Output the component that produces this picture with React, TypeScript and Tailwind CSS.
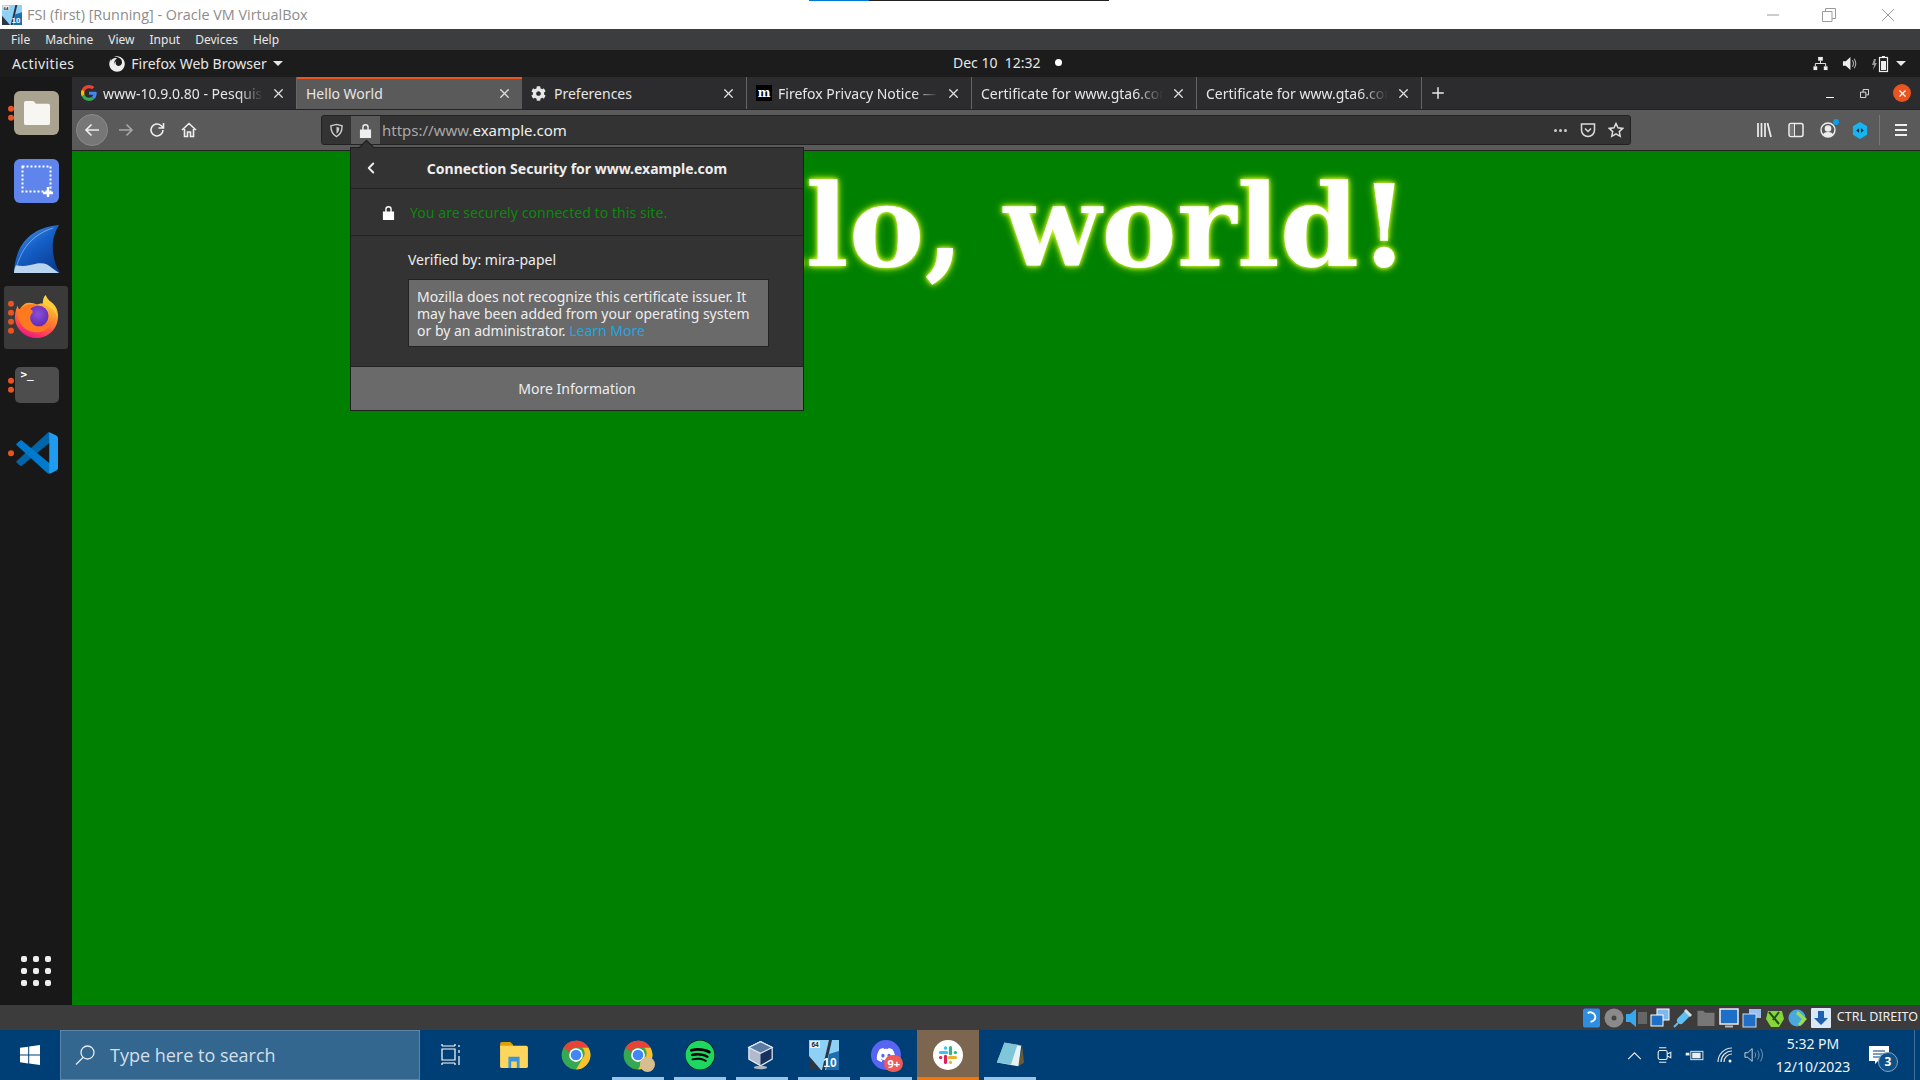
import { ChevronLeft, Plus, X } from "lucide-react";
import { FaCog, FaDiscord, FaFirefox, FaSpotify } from "react-icons/fa";

const ui = "font-['Noto_Sans',sans-serif]";

function GoogleIcon() {
  return (
    <svg viewBox="0 0 48 48" className="-mr-[2px] h-4 w-4 shrink-0">
      <path fill="#EA4335" d="M24 9.5c3.5 0 6.7 1.3 9.2 3.4l6.9-6.9C35.900 2.400 30.300 0 24 0 14.600 0 6.500 5.400 2.600 13.200l8 6.200C12.500 13.600 17.800 9.500 24 9.500z" />
      <path fill="#4285F4" d="M47 24.500c0-1.600-.1-3.100-.4-4.500H24v9h13c-.6 3-2.200 5.500-4.800 7.200l7.700 6C44.400 38 47 31.800 47 24.500z" />
      <path fill="#FBBC05" d="M10.600 28.600A14.500 14.500 0 0 1 10.600 19.400l-8-6.200a24 24 0 0 0 0 21.600l8-6.200z" />
      <path fill="#34A853" d="M24 48c6.500 0 11.900-2.100 15.900-5.800l-7.700-6c-2.200 1.400-4.900 2.300-8.200 2.300-6.200 0-11.500-4.100-13.400-9.900l-8 6.200C6.500 42.600 14.600 48 24 48z" />
    </svg>
  );
}

function MozillaIcon() {
  return (
    <div className="-mr-[2px] flex h-4 w-4 shrink-0 items-center justify-center bg-black font-['DejaVu_Serif',serif] text-[12px] leading-none font-bold text-white">
      m
    </div>
  );
}

function Tab({ title, icon, active, fade }: { title: string; icon?: React.ReactNode; active?: boolean; fade?: boolean }) {
  return (
    <div
      className={
        active
          ? "flex h-full w-[225px] items-center gap-2 border-t-2 border-[#e95420] bg-[#5a5a5a] pr-[10px] pb-[2px] pl-[9px]"
          : "flex h-full w-[225px] items-center gap-2 border-r border-[#666] pr-[10px] pl-[9px]"
      }
    >
      {icon}
      <span
        className={
          fade
            ? "min-w-0 flex-1 overflow-hidden text-[14px] whitespace-nowrap text-[#e6e6e6] [mask-image:linear-gradient(to_right,#000_85%,transparent)]"
            : "min-w-0 flex-1 overflow-hidden text-[14px] whitespace-nowrap text-[#e6e6e6]"
        }
      >
        {title}
      </span>
      <X className="h-[15px] w-[15px] shrink-0 text-[#e0e0e0]" strokeWidth={2} />
    </div>
  );
}

function DockDots({ count }: { count: number }) {
  return (
    <div className="absolute top-1/2 left-[4px] flex -translate-y-1/2 flex-col gap-[3.5px]">
      {Array.from({ length: count }).map((_, i) => (
        <span key={i} className="h-[5.500px] w-[5.500px] rounded-full bg-[#e95420]" />
      ))}
    </div>
  );
}

function FirefoxLogo() {
  return (
    <svg viewBox="0 0 48 48" className="ml-[1px] h-[48px] w-[46px]">
      <defs>
        <linearGradient id="ffa" x1="0.7" y1="0" x2="0.3" y2="1">
          <stop offset="0" stopColor="#ffe14d" />
          <stop offset="0.45" stopColor="#ff8a2a" />
          <stop offset="0.8" stopColor="#ff3d5a" />
          <stop offset="1" stopColor="#e3128f" />
        </linearGradient>
        <radialGradient id="ffb" cx="0.5" cy="0.4" r="0.6">
          <stop offset="0" stopColor="#8f4fd6" />
          <stop offset="1" stopColor="#5b2bb8" />
        </radialGradient>
      </defs>
      <path fill="url(#ffa)" d="M46 23c0 13-10 23-22 23C11 46 1 36 1 24c0-6 2-10 3-12 0 2 1 4 2 4 2-4 6-7 9-7 4 0 7 1 9 2 3-1 5-1 6-1 0-4 1-7 3-9 1 2 2 4 4 6 6 4 9 9 9 16z" />
      <circle cx="25" cy="23" r="11" fill="url(#ffb)" />
      <path fill="#ff7a1f" d="M4 20c2-4 6-8 11-9 6-1 10 0 13 2-5-1-10 0-11 3 3 1 3 3 2 4-2 2-3 5-1 9 2 4 7 6 12 5 5-1 8-3 10-7-2 7-8 13-16 13-11 0-21-9-20-20z" />
      <path fill="#ffcf3a" d="M33 2c1 3 3 5 5 7 4 4 7 9 7 15-2-6-5-9-9-11-2-1-4-1-5-3 0-3 1-6 2-8z" />
    </svg>
  );
}

function WiresharkLogo() {
  return (
    <svg viewBox="0 0 48 50" className="ml-[2px] h-[48px] w-[46px]">
      <defs>
        <linearGradient id="wsa" x1="0" y1="0" x2="0.7" y2="1">
          <stop offset="0" stopColor="#5aa0e8" />
          <stop offset="0.5" stopColor="#1560c8" />
          <stop offset="1" stopColor="#0a3f96" />
        </linearGradient>
      </defs>
      <path fill="url(#wsa)" d="M0 50C1 24 14 3 47 0c-5 8-8 18-6 30 1 8 3 14 7 20z" />
      <path fill="#b9d4ee" d="M0 50c0-3 1-6 2-8 8 2 15 0 23-2 6-1 11 1 15 5l7 5z" />
      <path fill="none" stroke="#fff" strokeOpacity="0.4" strokeWidth="1" d="M3 42c6-18 16-32 38-39" />
    </svg>
  );
}

function VsCodeLogo() {
  return (
    <svg viewBox="0 0 48 48" className="ml-[2px] h-[42px] w-[42px]">
      <path fill="#0065a9" d="M46 6 36 1 3 31l-3 3 3 3 3 2 40-33z" />
      <path fill="#007acc" d="M46 42 36 47 3 17 0 14l3-3 3-2 40 33z" />
      <path fill="#1f9cf0" d="M36 47c1 .5 3 .5 4 0l6-3c1-.5 2-2 2-3V7c0-1-1-2.500-2-3l-6-3c-1-.5-3-.5-4 0 2 0 2 1 2 3v40c0 2 0 3-2 3z" />
    </svg>
  );
}

function ChromeIcon() {
  return (
    <svg viewBox="0 0 48 48" className="h-[30px] w-[30px]">
      <circle cx="24" cy="24" r="23" fill="#34a853" />
      <path fill="#ea4335" d="M24 1a23 23 0 0 1 20 11.500H24a11.500 11.500 0 0 0-10.500 7L4.100 12.500A23 23 0 0 1 24 1z" />
      <path fill="#fbc02d" d="M44 12.500A23 23 0 0 1 24 47l10-17a11.500 11.500 0 0 0 0-17.500z" />
      <circle cx="24" cy="24" r="11" fill="#fff" />
      <circle cx="24" cy="24" r="8.500" fill="#4285f4" />
    </svg>
  );
}

function BoxIcon() {
  return (
    <svg viewBox="0 0 32 36" className="-ml-[4px] h-[30px] w-[27px]">
      <path fill="#16325c" stroke="#dfe8f3" strokeWidth="1.500" d="M16 2 30 9v14l-14 8-14-8V9z" />
      <path fill="#5c7ba3" stroke="#dfe8f3" strokeWidth="1.500" d="M16 2 30 9l-14 7L2 9z" />
      <path fill="#e4ebf4" d="M2 9l14 7v15L2 23z" opacity="0.75" />
      <ellipse cx="16" cy="33" rx="8" ry="2" fill="#aab7c7" />
    </svg>
  );
}

function VmIcon({ className }: { className: string }) {
  return (
    <svg viewBox="0 0 30 30" className={className}>
      <rect width="30" height="30" fill="#8fd0f5" />
      <path fill="#2a3644" d="M0 16 12 30H0zM20 0h3L16 30h-3z" />
      <path fill="#1b6fb0" d="M20 14l10-3v19H17z" />
      <rect x="1" y="1" width="10" height="7" fill="#eee" />
      <text x="6" y="7" textAnchor="middle" fontSize="6.500" fontWeight="700" fill="#222" fontFamily="Liberation Sans">64</text>
      <text x="21" y="27" textAnchor="middle" fontSize="12" fontWeight="700" fill="#fff" fontFamily="Liberation Sans">10</text>
    </svg>
  );
}

function SlackIcon() {
  return (
    <svg viewBox="0 0 48 48" className="h-[30px] w-[30px]">
      <circle cx="24" cy="24" r="24" fill="#fff" />
      <g strokeWidth="5" strokeLinecap="round" fill="none">
        <path stroke="#36c5f0" d="M12 20h10M20 12.500v.5" />
        <path stroke="#2eb67d" d="M28 12v10M35.500 20h.5" />
        <path stroke="#ecb22e" d="M26 28h10M28 35.500v.5" />
        <path stroke="#e01e5a" d="M20 26v10M12.500 28h-.5" />
      </g>
    </svg>
  );
}

function NotepadIcon() {
  return (
    <svg viewBox="0 0 32 32" className="h-[30px] w-[30px]">
      <path fill="#6d5a2e" d="M29 6 31 24 25 28z" />
      <path fill="#e8f2f5" d="M10 3 28 6 25 28 2 24z" />
      <path fill="#5cb7cf" d="M10 3 24 5 17 26 2 24z" opacity="0.75" />
      <path fill="none" stroke="#9fb4bb" strokeWidth="1" strokeDasharray="1 1" d="M10 3 28 6" />
    </svg>
  );
}

function TaskItem({ children, active, on = true }: { children: React.ReactNode; active?: boolean; on?: boolean }) {
  return (
    <div className={active ? "relative flex h-full w-[62px] items-center justify-center bg-[#7d6650]" : "relative flex h-full w-[62px] items-center justify-center"}>
      {children}
      {on && (
        <span className={active ? "absolute right-0 bottom-0 left-0 h-[3px] bg-[#f0760a]" : "absolute right-[5px] bottom-0 left-[5px] h-[3px] bg-[#99c5e8]"} />
      )}
    </div>
  );
}

function StatusIcon({ children }: { children: React.ReactNode }) {
  return <div className="flex h-[20px] w-[23px] items-center justify-center">{children}</div>;
}

export default function App() {
  return (
    <div className={`relative flex h-[1080px] w-[1920px] flex-col overflow-hidden bg-black ${ui}`}>
      {/* VirtualBox window title */}
      <div className="relative flex h-[29px] shrink-0 items-center bg-white pl-[2px]">
        <VmIcon className="mr-[5px] h-[20px] w-[20px]" />
        <span className="font-['Open_Sans',sans-serif] text-[14.400px] text-[#8c8c8c]">FSI (first) [Running] - Oracle VM VirtualBox</span>
        <div className="absolute top-0 left-[809px] flex h-px w-[300px]">
          <span className="w-[60px] bg-[#0078d7]" />
          <span className="flex-1 bg-[#222]" />
        </div>
        <div className="absolute top-0 right-0 flex h-full items-center text-[#9a9a9a]">
          <svg viewBox="0 0 14 14" className="mr-[42px] h-[14px] w-[14px]" stroke="currentColor" fill="none"><path d="M1 7h12" /></svg>
          <svg viewBox="0 0 14 14" className="mr-[45px] h-[14px] w-[14px]" stroke="currentColor" fill="none"><path d="M.5 3.500h9.500v10H.5zM3.500 3.500V.5h10v10H10" /></svg>
          <svg viewBox="0 0 14 14" className="mr-[25px] h-[14px] w-[14px]" stroke="currentColor" fill="none"><path d="M1 1l12 12M13 1 1 13" /></svg>
        </div>
      </div>

      {/* VirtualBox menu */}
      <div className="flex h-[21px] shrink-0 items-center gap-[15px] bg-[#3c3d3f] pl-[11px] text-[12px] text-[#e8e8e8]">
        <span>File</span>
        <span>Machine</span>
        <span>View</span>
        <span>Input</span>
        <span>Devices</span>
        <span>Help</span>
      </div>

      {/* GNOME top bar */}
      <div className="relative flex h-[27px] shrink-0 items-center bg-[#1c1c1c] pl-[12px] text-[14px] text-[#e6e6e6]">
        <span className="tracking-[0.4px]">Activities</span>
        <FaFirefox className="ml-[35px] h-[16px] w-[16px] text-[#eee]" />
        <span className="ml-[6px]">Firefox Web Browser</span>
        <span className="ml-[6px] h-0 w-0 border-x-[5px] border-t-[5px] border-x-transparent border-t-[#e6e6e6]" />
        <div className="absolute left-[953px] flex -translate-y-px items-center">
          <span className="whitespace-pre">Dec 10  12:32</span>
          <span className="ml-[14px] h-[7px] w-[7px] rounded-full bg-white" />
        </div>
        <div className="ml-auto flex items-center pr-[14px]">
          <svg viewBox="0 0 16 16" className="mr-[14px] h-[15px] w-[15px]" fill="#eee" stroke="#eee">
            <rect x="5.500" y="1" width="5" height="4" stroke="none" />
            <rect x="0.500" y="11" width="4" height="4" stroke="none" />
            <rect x="11.500" y="11" width="4" height="4" stroke="none" />
            <path fill="none" d="M8 5v3M2.500 11V8h11v3" />
          </svg>
          <svg viewBox="0 0 16 16" className="mr-[14px] h-[15px] w-[15px]" fill="#eee">
            <path d="M1 5.500h3L9 1v14l-5-4.500H1z" />
            <path fill="none" stroke="#aaa" strokeWidth="1.200" d="M11 4.500c1.500 2 1.500 5 0 7M13 3c2 3 2 7 0 10" />
          </svg>
          <svg viewBox="0 0 18 18" className="mr-[7px] h-[18px] w-[18px]">
            <path fill="#999" d="M3 4 1 10h2l-1 5 4-7H4l1-4z" />
            <rect x="8.500" y="2.500" width="8" height="14" fill="none" stroke="#eee" strokeWidth="1.200" />
            <rect x="10" y="6" width="5" height="9" fill="#eee" />
            <rect x="11" y="1" width="3" height="1.500" fill="#eee" />
          </svg>
          <span className="h-0 w-0 border-x-[5px] border-t-[5px] border-x-transparent border-t-[#e6e6e6]" />
        </div>
      </div>

      <div className="flex min-h-0 flex-1">
        {/* Ubuntu dock */}
        <div className="flex w-[72px] shrink-0 flex-col items-center bg-[#181818] pt-[2px]">
          <div className="relative flex h-[68px] w-[64px] items-center justify-center">
            <DockDots count={2} />
            <div className="ml-[1px] flex h-[44px] w-[45px] items-center justify-center rounded-[6px] bg-[#a9a390]">
              <svg viewBox="0 0 32 28" className="h-[26px] w-[32px]">
                <path fill="#f7f6f3" d="M2 3a2 2 0 0 1 2-2h8l3 3h13a2 2 0 0 1 2 2v19a2 2 0 0 1-2 2H4a2 2 0 0 1-2-2z" />
              </svg>
            </div>
          </div>
          <div className="flex h-[68px] w-[64px] items-center justify-center">
            <div className="ml-[1px] flex h-[44px] w-[45px] items-center justify-center rounded-[6px] bg-[#5f85ec]">
              <svg viewBox="0 0 32 32" className="h-[32px] w-[32px]" fill="none" stroke="#fff">
                <rect x="1.500" y="1.500" width="28" height="25" strokeWidth="2" strokeDasharray="2 2" />
                <path strokeWidth="2.500" d="M22 28h10M27 22v10" />
              </svg>
            </div>
          </div>
          <div className="flex h-[68px] w-[64px] items-center justify-center">
            <WiresharkLogo />
          </div>
          <div className="flex h-[68px] w-[64px] items-center">
            <div className="relative flex h-[63px] w-[64px] items-center justify-center rounded-[3px] bg-[#3a3a3a]">
              <DockDots count={4} />
              <FirefoxLogo />
            </div>
          </div>
          <div className="relative flex h-[68px] w-[64px] items-center justify-center">
            <DockDots count={2} />
            <div className="ml-[1px] h-[36px] w-[44px] rounded-[5px] bg-[#4d4d4d] pt-[1px] pl-[6px] font-['DejaVu_Sans_Mono',monospace] text-[11px] leading-[14px] font-bold text-white">
              {">_"}
            </div>
          </div>
          <div className="relative flex h-[68px] w-[64px] items-center justify-center">
            <DockDots count={1} />
            <VsCodeLogo />
          </div>
          <div className="mt-auto mb-[19px] grid grid-cols-3 gap-[6px]">
            {Array.from({ length: 9 }).map((_, i) => (
              <span key={i} className="h-[6px] w-[6px] rounded-[2px] bg-[#eee]" />
            ))}
          </div>
        </div>

        <div className="flex min-w-0 flex-1 flex-col">
          {/* Firefox tab strip */}
          <div className="flex h-[33px] shrink-0 items-center border-b border-[#222] bg-[#2c2c2e]">
            <Tab title="www-10.9.0.80 - Pesquisa Google" icon={<GoogleIcon />} fade />
            <Tab title="Hello World" active />
            <Tab title="Preferences" icon={<FaCog className="h-[15px] w-[15px] shrink-0 text-[#e6e6e6]" />} />
            <Tab title="Firefox Privacy Notice — Mozilla" icon={<MozillaIcon />} fade />
            <Tab title="Certificate for www.gta6.com" fade />
            <Tab title="Certificate for www.gta6.com" fade />
            <Plus className="ml-[7px] h-[18px] w-[18px] text-[#e6e6e6]" strokeWidth={2} />
            <div className="ml-auto flex items-center pr-[9px]">
              <span className="mr-[26px] h-px w-[8px] translate-y-[4px] bg-white" />
              <svg viewBox="0 0 10 10" className="mr-[24px] h-[9px] w-[9px]" fill="none" stroke="#eee"><path d="M.5 3.500h6v6h-6zM3.500 3.500V.5h6v6H7" /></svg>
              <div className="flex h-[18px] w-[18px] items-center justify-center rounded-full bg-[#e95420]">
                <X className="h-[11px] w-[11px] text-white" strokeWidth={2.500} />
              </div>
            </div>
          </div>

          {/* Firefox navigation bar */}
          <div className="flex h-[41px] shrink-0 items-center border-b border-[#222] bg-[#5a5a5a] pl-[4px]">
            <div className="flex h-[32px] w-[32px] items-center justify-center rounded-full border border-[#8a8a8a] bg-[#777]">
              <svg viewBox="0 0 16 16" className="h-[16px] w-[16px]" fill="none" stroke="#eee" strokeWidth="1.600"><path d="M15 8H2M7.500 2.500 2 8l5.500 5.500" /></svg>
            </div>
            <svg viewBox="0 0 16 16" className="ml-[10px] h-[16px] w-[16px]" fill="none" stroke="#a8a8a8" strokeWidth="1.600"><path d="M1 8h13M8.500 2.500 14 8l-5.500 5.500" /></svg>
            <svg viewBox="0 0 16 16" className="ml-[15px] h-[16px] w-[16px]" fill="none" stroke="#eee" strokeWidth="1.600"><path d="M14 8a6 6 0 1 1-2-4.500L14 5.500M14.500 1v5h-5" /></svg>
            <svg viewBox="0 0 16 16" className="ml-[16px] h-[16px] w-[16px]" fill="none" stroke="#eee" strokeWidth="1.600"><path d="M1 8l7-6.500L15 8M3.500 7v7.500h3V10h3v4.500h3V7" /></svg>
            <div className="ml-[124px] flex h-[30px] w-[1310px] items-center rounded-[3px] border border-[#222] bg-[#333]">
              <div className="flex h-full w-[29px] items-center justify-center">
                <svg viewBox="0 0 16 16" className="h-[15px] w-[15px]" fill="none" stroke="#ccc" strokeWidth="1.500"><path d="M8 1.500 14 3c0 6-2 9.500-6 11.500C4 12.500 2 9 2 3z" /><path fill="#ccc" stroke="none" d="M8 4l3 1c0 3-1 5-3 6.500z" /></svg>
              </div>
              <div className="flex h-full w-[29px] items-center justify-center bg-[#5a5a5a]">
                <svg viewBox="0 0 14 16" className="h-[15px] w-[13px]" fill="#eee"><path d="M1 7h12v9H1zM3.500 7V4.500a3.500 3.500 0 0 1 7 0V7H9V4.500a2 2 0 0 0-4 0V7z" /></svg>
              </div>
              <span className="ml-[2px] text-[15px] text-[#a8a8a8]">https://www.<span className="text-[#eee]">example.com</span></span>
              <div className="ml-auto flex items-center pr-[6px]">
                <span className="mr-[13px] flex gap-[2px]">
                  <span className="h-[3px] w-[3px] rounded-full bg-[#ccc]" />
                  <span className="h-[3px] w-[3px] rounded-full bg-[#ccc]" />
                  <span className="h-[3px] w-[3px] rounded-full bg-[#ccc]" />
                </span>
                <svg viewBox="0 0 16 16" className="mr-[12px] h-[16px] w-[16px]" fill="none" stroke="#ddd" strokeWidth="1.500"><path d="M1.500 2h13v6a6.500 6.500 0 0 1-13 0zM5 6.500l3 3 3-3" /></svg>
                <svg viewBox="0 0 16 16" className="h-[16px] w-[16px]" fill="none" stroke="#ddd" strokeWidth="1.500"><path d="M8 1.500l2 4.300 4.700.6-3.400 3.200.9 4.700L8 11.900l-4.200 2.400.9-4.700L1.300 6.400 6 5.800z" /></svg>
              </div>
            </div>
            <div className="ml-auto flex h-full items-center pr-[12px]">
              <svg viewBox="0 0 16 16" className="mr-[16px] h-[16px] w-[16px]" fill="none" stroke="#eee" strokeWidth="1.700"><path d="M2 1v14M5.500 1v14M9 1v14M11.500 1l3.500 14" /></svg>
              <svg viewBox="0 0 16 16" className="mr-[16px] h-[16px] w-[16px]" fill="none" stroke="#eee" strokeWidth="1.500"><rect x="1" y="1.500" width="14" height="13" rx="2" /><path fill="#777" stroke="none" d="M2 2h4v12H2z" /><path d="M6.500 2v12" strokeWidth="1" /></svg>
              <div className="relative mr-[16px] h-[16px] w-[16px]">
                <svg viewBox="0 0 16 16" className="h-[16px] w-[16px]" fill="none" stroke="#eee" strokeWidth="1.400"><circle cx="8" cy="8" r="7" /><circle cx="8" cy="6.500" r="2.600" fill="#eee" /><path fill="#eee" d="M3.500 12.500C5 10 11 10 12.500 12.500 10 15 6 15 3.500 12.500z" /></svg>
                <span className="absolute -top-[3px] -right-[3px] h-[6px] w-[6px] rounded-full bg-[#0a9fe8]" />
              </div>
              <svg viewBox="0 0 16 18" className="mr-[11px] h-[17px] w-[16px]"><path fill="#14b5f0" d="M8 0l7.500 4.500v9L8 18 .5 13.500v-9z" /><path fill="#123" d="M4 9l3-2.500v5zM12 9 9 6.500v5z" /></svg>
              <span className="mr-[14px] h-[30px] w-px bg-[#777]" />
              <svg viewBox="0 0 14 14" className="h-[14px] w-[14px]" fill="none" stroke="#eee" strokeWidth="2"><path d="M1 2h12M1 7h12M1 12h12" /></svg>
            </div>
          </div>

          {/* page content */}
          <div className="flex flex-1 justify-center bg-[#008000] pt-[9px]">
            <h1 className="font-['DejaVu_Serif',serif] text-[113.500px] leading-[132px] font-bold whitespace-nowrap text-white [text-shadow:0_0_4px_#e4ff40,0_0_9px_#c8ff00]">
              Hello, world!
            </h1>
          </div>
        </div>
      </div>

      {/* VirtualBox status bar */}
      <div className="flex h-[25px] shrink-0 items-center justify-end bg-[#3c3c3c] text-[12.500px] text-[#eee]">
        <StatusIcon><svg viewBox="0 0 18 20" className="h-[20px] w-[17px]"><rect width="18" height="20" rx="2" fill="#2f8ee0" /><path d="M5 5a5 5 0 1 1 3 9" fill="none" stroke="#fff" strokeWidth="2" /></svg></StatusIcon>
        <StatusIcon><svg viewBox="0 0 20 20" className="h-[20px] w-[20px]"><circle cx="10" cy="10" r="9.500" fill="#8a8a8a" /><circle cx="10" cy="10" r="2.500" fill="#444" /></svg></StatusIcon>
        <StatusIcon><svg viewBox="0 0 22 20" className="h-[20px] w-[22px]"><path fill="#38a8ee" d="M0 6h4l6-5v18l-6-5H0z" /><rect x="12" y="4" width="9" height="12" fill="#666" /></svg></StatusIcon>
        <StatusIcon><svg viewBox="0 0 20 20" className="h-[20px] w-[20px]"><rect x="7" y="1" width="12" height="11" fill="#7db8ee" stroke="#fff" /><rect x="1" y="7" width="12" height="11" fill="#1d6fc8" stroke="#fff" /></svg></StatusIcon>
        <StatusIcon><svg viewBox="0 0 20 20" className="h-[20px] w-[20px]"><path fill="#5cc0f5" d="M12 3l5 5-7 7c-2 2-4 1-5 0s-2-3 0-5z" /><path fill="#ddd" d="M13 1l6 6-2 2-6-6z" /><path stroke="#5cc0f5" strokeWidth="2" d="M5 15l-4 4" /></svg></StatusIcon>
        <StatusIcon><svg viewBox="0 0 20 20" className="h-[19px] w-[20px]"><path fill="#777" d="M1 3h6l2 2h10v14H1z" /></svg></StatusIcon>
        <StatusIcon><svg viewBox="0 0 20 20" className="h-[20px] w-[20px]"><rect x="1" y="1" width="18" height="15" fill="#1d6fc8" stroke="#eee" strokeWidth="1.500" /><path stroke="#bbb" strokeWidth="2" d="M6 18.500h8" /></svg></StatusIcon>
        <StatusIcon><svg viewBox="0 0 20 20" className="h-[20px] w-[20px]"><rect x="7" y="1" width="12" height="9" fill="#9fc0ee" /><rect x="1" y="6" width="13" height="13" fill="#1d6fc8" stroke="#cde" /></svg></StatusIcon>
        <StatusIcon><svg viewBox="0 0 20 20" className="h-[20px] w-[20px]"><path fill="#86d63a" d="M3 3l14 0 2 8-5 8H6L1 11z" /><path stroke="#205010" strokeWidth="2" fill="none" d="M4 4l10 12M14 4 8 12" /></svg></StatusIcon>
        <StatusIcon><svg viewBox="0 0 20 20" className="h-[20px] w-[20px]"><circle cx="9" cy="10" r="8.500" fill="#4aa8dc" /><path fill="#9be04a" d="M10 3l9 8-7 7-2-2 4-5-6-5z" /></svg></StatusIcon>
        <StatusIcon><svg viewBox="0 0 20 20" className="h-[20px] w-[20px]"><rect width="20" height="20" rx="1" fill="#d9e9f8" /><path fill="#1d5fb0" d="M7 3h6v7h4l-7 7-7-7h4z" /></svg></StatusIcon>
        <span className="ml-[4px] pr-[2px] whitespace-nowrap">CTRL DIREITO</span>
      </div>

      {/* Windows taskbar */}
      <div className="flex h-[50px] shrink-0 items-center bg-[#003f75]">
        <div className="flex h-full w-[60px] items-center justify-center">
          <svg viewBox="0 0 20 20" className="h-[20px] w-[20px]" fill="#fff">
            <path d="M0 2.800 8.200 1.700v7.900H0zM9.200 1.500 20 0v9.600H9.200zM0 10.500h8.200v7.900L0 17.200zM9.200 10.500H20V20L9.200 18.500z" />
          </svg>
        </div>
        <div className="flex h-full w-[360px] items-center border border-[#5b86aa] bg-[#33678f] pl-[14px] font-['Open_Sans',sans-serif] text-[18px] text-[#d5dfe8]">
          <svg viewBox="0 0 20 20" className="mr-[15px] h-[20px] w-[20px]" fill="none" stroke="#e6edf3" strokeWidth="1.300"><circle cx="12.500" cy="7.500" r="6.500" /><path d="M8 12.500 1 19.500" /></svg>
          Type here to search
        </div>
        <div className="flex h-full w-[61px] items-center justify-center">
          <svg viewBox="0 0 20 24" className="h-[24px] w-[20px]" fill="none" stroke="#fff" strokeWidth="1.200">
            <path d="M1 3h13M1 1v2M14 1v2M1 6h13v11H1zM1 20h13M1 20v2M14 20v2M18 2v2M18 7v3M18 13v9" />
          </svg>
        </div>
        <div className="ml-[2px] flex h-full items-center">
          <TaskItem on={false}>
            <svg viewBox="0 0 30 28" className="h-[26px] w-[28px]">
              <path fill="#e0a000" d="M0 2a2 2 0 0 1 2-2h9l3 3v3H0z" />
              <path fill="#ffd65c" d="M0 4h28a2 2 0 0 1 2 2v20a2 2 0 0 1-2 2H2a2 2 0 0 1-2-2z" />
              <path fill="#3a96d8" d="M9 16h12v12h-3v-7h-6v7H9z" />
            </svg>
          </TaskItem>
          <TaskItem on={false}><ChromeIcon /></TaskItem>
          <TaskItem>
            <div className="relative">
              <ChromeIcon />
              <span className="absolute -right-[2px] -bottom-[2px] h-[15px] w-[15px] rounded-full bg-[#d8bd8e]" />
            </div>
          </TaskItem>
          <TaskItem>
            <div className="flex h-[30px] w-[30px] items-center justify-center rounded-full bg-black">
              <FaSpotify className="h-[30px] w-[30px] text-[#1ed760]" />
            </div>
          </TaskItem>
          <TaskItem><BoxIcon /></TaskItem>
          <TaskItem><VmIcon className="h-[30px] w-[30px]" /></TaskItem>
          <TaskItem>
            <div className="relative flex h-[30px] w-[30px] items-center justify-center rounded-full bg-[#5865f2]">
              <FaDiscord className="h-[20px] w-[20px] text-white" />
              <span className="absolute -right-[2px] -bottom-[2px] rounded-full bg-[#ed5a5a] px-[3px] text-[11px] leading-[17px] font-bold text-white">9+</span>
            </div>
          </TaskItem>
          <TaskItem active><SlackIcon /></TaskItem>
          <TaskItem><NotepadIcon /></TaskItem>
        </div>

        <div className="ml-auto flex h-full items-center text-white">
          <svg viewBox="0 0 16 10" className="mr-[15px] h-[9px] w-[15px]" fill="none" stroke="#eee" strokeWidth="1.200"><path d="M1 9l7-7 7 7" /></svg>
          <svg viewBox="0 0 16 20" className="mr-[13px] h-[18px] w-[15px]" fill="none" stroke="#eee" strokeWidth="1.200"><rect x="1" y="5" width="10" height="10" rx="2" /><path d="M11 9l4-2v6l-4-2M2 2h8M2 18h8" /></svg>
          <svg viewBox="0 0 20 14" className="mr-[12px] h-[13px] w-[20px]" fill="#eee"><rect x="5.500" y="2.500" width="13" height="9" fill="none" stroke="#eee" /><rect x="7" y="4" width="9" height="6" /><path d="M0 4h4v3H0zM2 1v3" /></svg>
          <svg viewBox="0 0 16 16" className="mr-[11px] h-[16px] w-[16px]" fill="none" stroke="#ddd" strokeWidth="1.200"><path d="M1 15a14 14 0 0 1 14-14M4 15A11 11 0 0 1 15 4M7 15a8 8 0 0 1 8-8" /><circle cx="13" cy="14" r="1.500" fill="#fff" stroke="none" /></svg>
          <svg viewBox="0 0 22 16" className="mr-[11px] h-[16px] w-[20px]" fill="none" stroke="#ddd"><path d="M1 5.500h3L9 1v14l-5-4.500H1z" /><path stroke="#7f9db8" d="M12 5c1 2 1 4 0 6M15 3c2 3 2 7 0 10M18 1c3 4 3 10 0 14" /></svg>
          <div className="flex w-[76px] flex-col items-center text-[14px] leading-[23px] whitespace-nowrap text-[#eef3f7]">
            <span>5:32 PM</span>
            <span>12/10/2023</span>
          </div>
          <div className="relative mr-[25px] ml-[18px] h-[20px] w-[20px]">
            <svg viewBox="0 0 20 20" className="h-[20px] w-[20px]" fill="#fff"><path d="M0 1h20v15H9l-3 3v-3H0z" /><path stroke="#003f75" d="M4 6h12M4 9h12M4 12h8" /></svg>
            <span className="absolute top-[7px] left-[9px] flex h-[20px] w-[20px] items-center justify-center rounded-full border border-[#7fa6c6] bg-[#0f5089] text-[12px] font-bold text-white">3</span>
          </div>
          <span className="mr-[5px] h-full w-px bg-[#3f6f98]" />
        </div>
      </div>

      {/* identity popup, opened over the page */}
      <div className="absolute top-[147px] left-[350px] flex h-[264px] w-[454px] flex-col border border-[#1f1f1f] bg-[#333] text-[14px] text-[#eee]">
        <span className="absolute -top-[6px] left-[10px] h-[11px] w-[11px] rotate-45 border-t border-l border-[#1f1f1f] bg-[#333]" />
        <div className="relative flex h-[41px] shrink-0 items-center justify-center border-b border-[#222] font-bold">
          <ChevronLeft className="absolute left-[11px] h-[18px] w-[18px]" strokeWidth={2.500} />
          Connection Security for www.example.com
        </div>
        <div className="flex h-[47px] shrink-0 items-center border-b border-[#222] pl-[31px] text-[#0e870e]">
          <svg viewBox="0 0 14 16" className="mr-[15px] h-[15px] w-[13px]" fill="#fff"><path d="M1 7h12v9H1zM3.500 7V4.500a3.500 3.500 0 0 1 7 0V7H9V4.500a2 2 0 0 0-4 0V7z" /></svg>
          <span className="tracking-[0.06px]">You are securely connected to this site.</span>
        </div>
        <div className="flex-1 pt-[14px] pl-[57px]">
          <p className="leading-[20px]">Verified by: mira-papel</p>
          <p className="mt-[9px] h-[68px] w-[361px] border border-[#222] bg-[#6a6a6a] px-[8px] py-[8px] leading-[17px] whitespace-nowrap">
            Mozilla does not recognize this certificate issuer. It
            <br />
            may have been added from your operating system
            <br />
            or by an administrator. <span className="text-[#1fa6e0]">Learn More</span>
          </p>
        </div>
        <div className="flex h-[44px] shrink-0 items-center justify-center border-t border-[#222] bg-[#6a6a6a]">More Information</div>
      </div>
    </div>
  );
}
